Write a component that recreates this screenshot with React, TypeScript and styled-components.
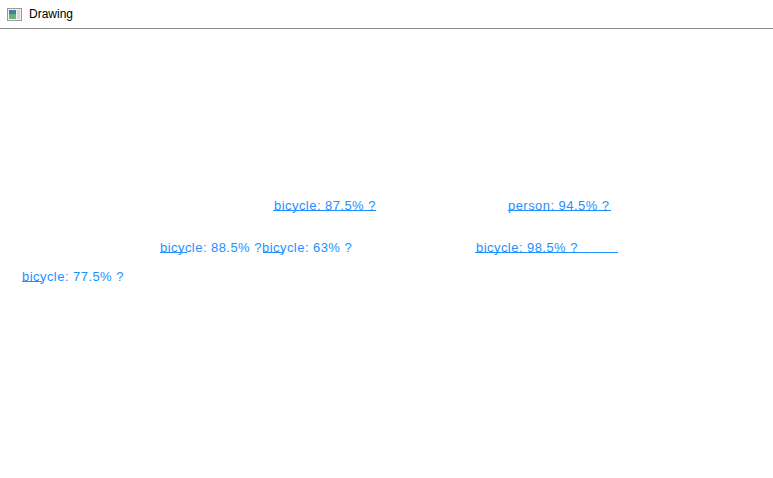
import React from "react";
import styled, { createGlobalStyle } from "styled-components";

const Global = createGlobalStyle`
  html, body { margin: 0; padding: 0; background: #ffffff; }
  body { font-family: "Liberation Sans", Arial, sans-serif; }
`;

const Window = styled.div`
  width: 773px;
  height: 478px;
  display: flex;
  flex-direction: column;
  background: #ffffff;
  overflow: hidden;
`;

const TitleBar = styled.div`
  height: 28px;
  flex: 0 0 28px;
  display: flex;
  align-items: center;
  gap: 7px;
  padding-left: 7px;
  border-bottom: 1px solid #8c8c8c;
  box-sizing: content-box;
`;

const Title = styled.span`
  font-family: "Liberation Sans", Arial, sans-serif;
  font-size: 12px;
  color: #000000;
  line-height: 14px;
  margin-top: -1px;
`;

const Canvas = styled.div`
  position: relative;
  flex: 1;
`;

const Label = styled.div<{ $x: number; $y: number }>`
  position: absolute;
  left: ${(p) => p.$x}px;
  top: ${(p) => p.$y}px;
  font-family: "Liberation Sans", Arial, sans-serif;
  font-size: 13px;
  line-height: 15px;
  color: #1e90ff;
  white-space: nowrap;
  letter-spacing: 0.45px;
`;

const Rule = styled.div<{ $x: number; $y: number; $w: number }>`
  position: absolute;
  left: ${(p) => p.$x}px;
  top: ${(p) => p.$y}px;
  width: ${(p) => p.$w}px;
  height: 1px;
  background: #1e90ff;
`;

const CANVAS_TOP = 29;

type Det = { text: string; x: number; base: number; lx: number; lw: number };

const dets: Det[] = [
  { text: "bicycle: 87.5% ?", x: 274, base: 210, lx: 273, lw: 103 },
  { text: "person: 94.5% ?", x: 508, base: 210, lx: 508, lw: 103 },
  { text: "bicycle: 88.5% ?", x: 160, base: 252, lx: 160, lw: 27 },
  { text: "bicycle: 63% ?", x: 262, base: 252, lx: 263, lw: 20 },
  { text: "bicycle: 98.5% ?", x: 476, base: 252, lx: 475, lw: 143 },
  { text: "bicycle: 77.5% ?", x: 22, base: 281, lx: 22, lw: 20 },
];

const AppIcon = () => (
  <svg width="15" height="13" viewBox="0 0 15 13">
    <rect x="0.5" y="0.5" width="14" height="12" fill="#f2f2f2" stroke="#9a9a9a" />
    <rect x="2" y="2" width="7" height="9" fill="#3f7fa0" />
    <rect x="2" y="6" width="7" height="5" fill="#6fae7a" />
    <rect x="10" y="2" width="3" height="9" fill="#d8d8d8" />
  </svg>
);

export default function App() {
  return (
    <>
      <Global />
      <Window>
        <TitleBar>
          <AppIcon />
          <Title>Drawing</Title>
        </TitleBar>
        <Canvas>
          {dets.map((d, i) => (
            <React.Fragment key={i}>
              <Label $x={d.x} $y={d.base - 12 - CANVAS_TOP}>{d.text}</Label>
              <Rule $x={d.lx} $y={d.base - CANVAS_TOP} $w={d.lw} />
            </React.Fragment>
          ))}
        </Canvas>
      </Window>
    </>
  );
}
